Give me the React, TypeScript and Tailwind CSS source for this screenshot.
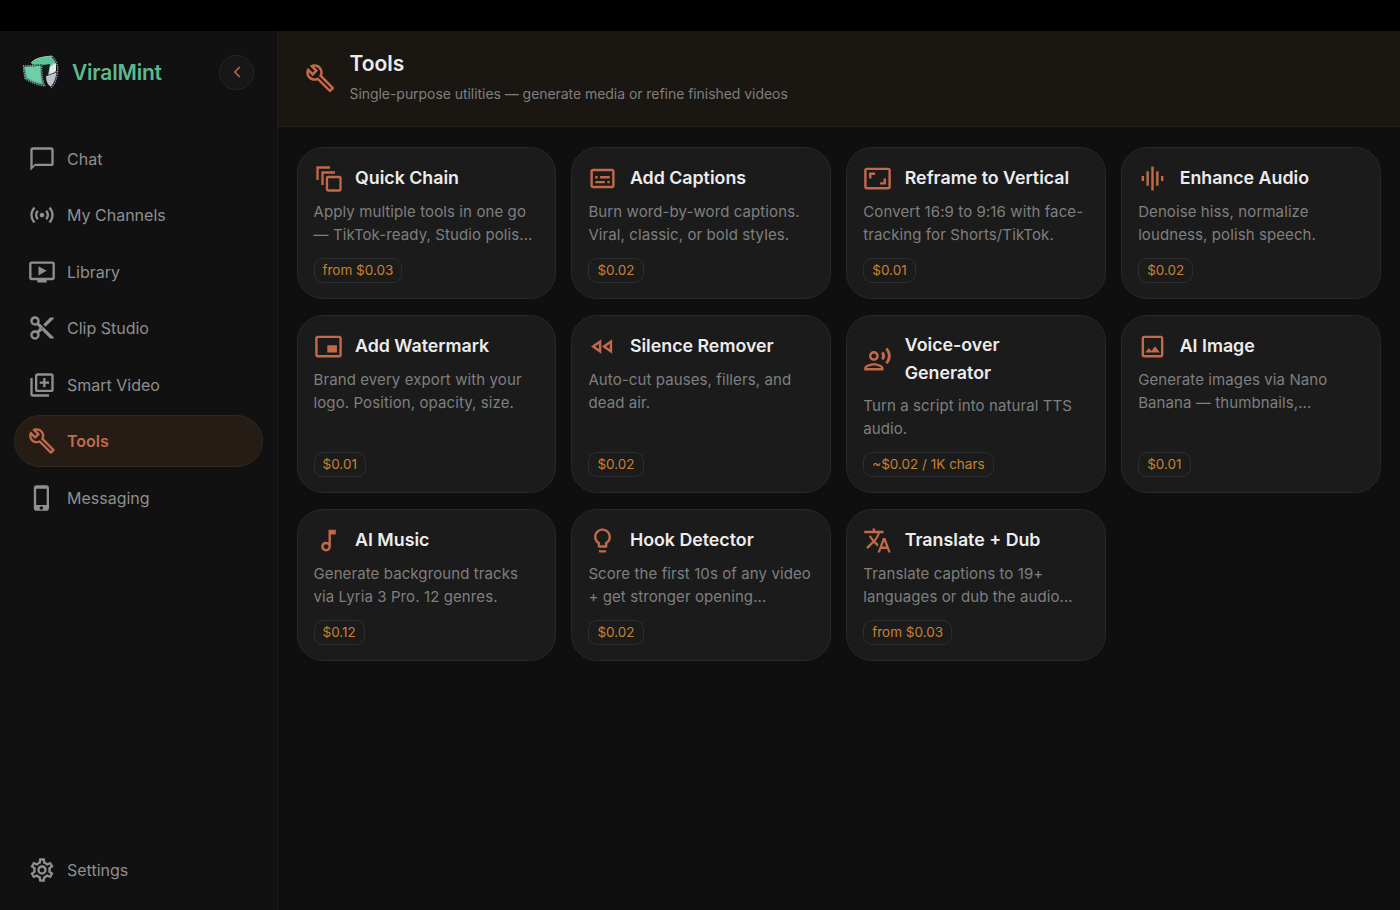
import type { ComponentType } from "react";
import { ChevronLeft } from "lucide-react";
import {
  MdOutlineAspectRatio,
  MdOutlineBuild,
  MdOutlineChatBubbleOutline,
  MdOutlineContentCut,
  MdOutlineFastRewind,
  MdOutlineGraphicEq,
  MdOutlineImage,
  MdOutlineLibraryAdd,
  MdOutlineLightbulb,
  MdOutlineMusicNote,
  MdOutlineOndemandVideo,
  MdOutlinePhoneIphone,
  MdPictureInPictureAlt,
  MdOutlineRecordVoiceOver,
  MdOutlineSensors,
  MdOutlineSettings,
  MdOutlineSubtitles,
  MdOutlineTranslate,
} from "react-icons/md";

type IconType = ComponentType<{ className?: string }>;

const StackIcon = ({ className }: { className?: string }) => (
  <svg viewBox="-2 -2 29 29" fill="none" stroke="currentColor" strokeWidth="2.3" className={className}>
    <path d="M1.5 14V1.5H14" />
    <path d="M6.5 19V6.5H19" />
    <rect x="11" y="11" width="13.5" height="13.5" rx="1" />
  </svg>
);

const Logo = () => (
  <svg viewBox="0 0 36 34" className="h-[34px] w-[36px]">
    <path d="M8 8 Q12 2 29 1 Q34 6 32 14 L25 23 L22 11 L10 10 Z" fill="#5fc49b" />
    <path d="M20 10 L27 9 L25 20 L21 25 Z" fill="#171c1b" />
    <path d="M27 12 L33 7 L33 16 L26 21 Z" fill="#e6eaee" />
    <path d="M23 21 L34 16 Q33 28 28 32 Q23 29 23 21 Z" fill="#bcc4cd" />
    <path d="M23 21 L34 17" stroke="#2d3238" strokeWidth="0.8" />
    <path d="M29 1 Q36 8 34.5 18 Q33 28 28 33" fill="none" stroke="#23282a" strokeWidth="2" />
    <path d="M29 1 Q36 8 34.5 18 Q33 28 28 33" fill="none" stroke="#e8e8e8" strokeWidth="1" strokeDasharray="1 1.4" />
    <path d="M8 8 Q12 2 29 1" fill="none" stroke="#9adfc3" strokeWidth="0.8" />
    <path d="M0 11 L19 10 Q18 22 22 31 Q12 30 2 24 Z" fill="#4fae89" />
    <path d="M2 12 L17 11 Q17 21 19 28 Q10 27 4 22 Z" fill="#6fcea8" />
    <path d="M0 11 L19 10 Q18 22 22 31 Q12 30 2 24 Z" fill="none" stroke="#23282a" strokeWidth="1.5" />
    <path d="M0 11 L19 10 Q18 22 22 31 Q12 30 2 24 Z" fill="none" stroke="#e8e8e8" strokeWidth="0.9" strokeDasharray="1 1.3" />
  </svg>
);

const navItems: { icon: IconType; label: string; active?: boolean }[] = [
  { icon: MdOutlineChatBubbleOutline, label: "Chat" },
  { icon: MdOutlineSensors, label: "My Channels" },
  { icon: MdOutlineOndemandVideo, label: "Library" },
  { icon: MdOutlineContentCut, label: "Clip Studio" },
  { icon: MdOutlineLibraryAdd, label: "Smart Video" },
  { icon: MdOutlineBuild, label: "Tools", active: true },
  { icon: MdOutlinePhoneIphone, label: "Messaging" },
];

const tools: { icon: IconType; title: string[]; lines: string[]; price: string }[] = [
  { icon: StackIcon, title: ["Quick Chain"], lines: ["Apply multiple tools in one go", "— TikTok-ready, Studio polis..."], price: "from $0.03" },
  { icon: MdOutlineSubtitles, title: ["Add Captions"], lines: ["Burn word-by-word captions.", "Viral, classic, or bold styles."], price: "$0.02" },
  { icon: MdOutlineAspectRatio, title: ["Reframe to Vertical"], lines: ["Convert 16:9 to 9:16 with face-", "tracking for Shorts/TikTok."], price: "$0.01" },
  { icon: MdOutlineGraphicEq, title: ["Enhance Audio"], lines: ["Denoise hiss, normalize", "loudness, polish speech."], price: "$0.02" },
  { icon: MdPictureInPictureAlt, title: ["Add Watermark"], lines: ["Brand every export with your", "logo. Position, opacity, size."], price: "$0.01" },
  { icon: MdOutlineFastRewind, title: ["Silence Remover"], lines: ["Auto-cut pauses, fillers, and", "dead air."], price: "$0.02" },
  { icon: MdOutlineRecordVoiceOver, title: ["Voice-over", "Generator"], lines: ["Turn a script into natural TTS", "audio."], price: "~$0.02 / 1K chars" },
  { icon: MdOutlineImage, title: ["AI Image"], lines: ["Generate images via Nano", "Banana — thumbnails,..."], price: "$0.01" },
  { icon: MdOutlineMusicNote, title: ["AI Music"], lines: ["Generate background tracks", "via Lyria 3 Pro. 12 genres."], price: "$0.12" },
  { icon: MdOutlineLightbulb, title: ["Hook Detector"], lines: ["Score the first 10s of any video", "+ get stronger opening..."], price: "$0.02" },
  { icon: MdOutlineTranslate, title: ["Translate + Dub"], lines: ["Translate captions to 19+", "languages or dub the audio..."], price: "from $0.03" },
];

const NavRow = ({ icon: Icon, label, active }: { icon: IconType; label: string; active?: boolean }) => (
  <div
    className={`flex h-[52px] items-center gap-[11.5px] rounded-[26px] border pl-[12.5px] ${
      active ? "border-[#33271f] bg-[#261c16] text-[#c2694a]" : "border-transparent text-[#8f8f8f]"
    }`}
  >
    <Icon className="h-[28px] w-[28px] shrink-0" />
    <span className={`text-[16px] ${active ? "font-semibold" : ""}`}>{label}</span>
  </div>
);

export default function App() {
  return (
    <div className="flex h-screen flex-col overflow-hidden bg-[#0f0f0f] font-['Inter',sans-serif]">
      <div className="h-[31px] shrink-0 bg-black" />
      <div className="flex min-h-0 flex-1">
        {/* Sidebar */}
        <aside className="flex w-[278px] shrink-0 flex-col border-r border-[#1c1c1c] bg-[#111111] pb-[14px] pl-[14px] pr-[14px]">
          <div className="flex h-[82px] items-center pl-[9px] pr-[9px]">
            <Logo />
            <span className="ml-[13px] mt-[1px] text-[21px] font-semibold tracking-[-0.2px] text-[#5bb98f]">ViralMint</span>
            <button className="ml-auto flex h-[35px] w-[35px] items-center justify-center rounded-full border border-[#262626] bg-[#171717] text-[#c2694a]">
              <ChevronLeft className="h-[18px] w-[18px]" strokeWidth={2.2} />
            </button>
          </div>
          <nav className="mt-[19.75px] flex flex-col gap-[4.5px]">
            {navItems.map((item) => (
              <NavRow key={item.label} {...item} />
            ))}
          </nav>
          <div className="mt-auto">
            <NavRow icon={MdOutlineSettings} label="Settings" />
          </div>
        </aside>

        <div className="flex min-w-0 flex-1 flex-col">
          {/* Header */}
          <header className="flex h-[96px] shrink-0 items-center gap-[14px] border-b border-[#26211c] bg-[#1a1612] pl-[27px]">
            <MdOutlineBuild className="h-[30.5px] w-[30.5px] text-[#c2694a]" />
            <div className="mb-[3px]">
              <h1 className="text-[21px] font-semibold leading-[30px] text-[#ececec]">Tools</h1>
              <p className="mt-[4px] text-[14px] leading-[22px] tracking-[-0.05px] text-[#7f7f7f]">
                Single-purpose utilities — generate media or refine finished videos
              </p>
            </div>
          </header>

          {/* Tool cards */}
          <main className="grid grid-cols-4 items-stretch gap-x-[15px] gap-y-[15.5px] pl-[18.5px] pr-[19px] pt-[19.5px]">
            {tools.map((tool) => (
              <div
                key={tool.title[0]}
                className="flex flex-col rounded-[26px] border border-[#282828] bg-[#1b1b1b] px-[16px] pb-[15.5px] pt-[15px]"
              >
                <div className="flex min-h-[31px] items-center gap-[12.5px] py-[0.5px]">
                  <tool.icon className="h-[29px] w-[29px] shrink-0 text-[#c2694a]" />
                  <h3 className="text-[17.8px] font-semibold leading-[28px] text-[#ececec]">
                    {tool.title.map((line) => (
                      <span key={line} className="block">{line}</span>
                    ))}
                  </h3>
                </div>
                <p className="mt-[6px] text-[15px] leading-[23px] tracking-[0.1px] text-[#7f7f7f]">
                  {tool.lines.map((line) => (
                    <span key={line} className="block whitespace-nowrap">{line}</span>
                  ))}
                </p>
                <div className="mt-auto flex items-start pt-[12px]">
                  <span className="rounded-[9px] border border-[#2e2e2e] px-[8px] text-[13.5px] leading-[23px] text-[#c6822f]">
                    {tool.price}
                  </span>
                </div>
              </div>
            ))}
          </main>
        </div>
      </div>
    </div>
  );
}
